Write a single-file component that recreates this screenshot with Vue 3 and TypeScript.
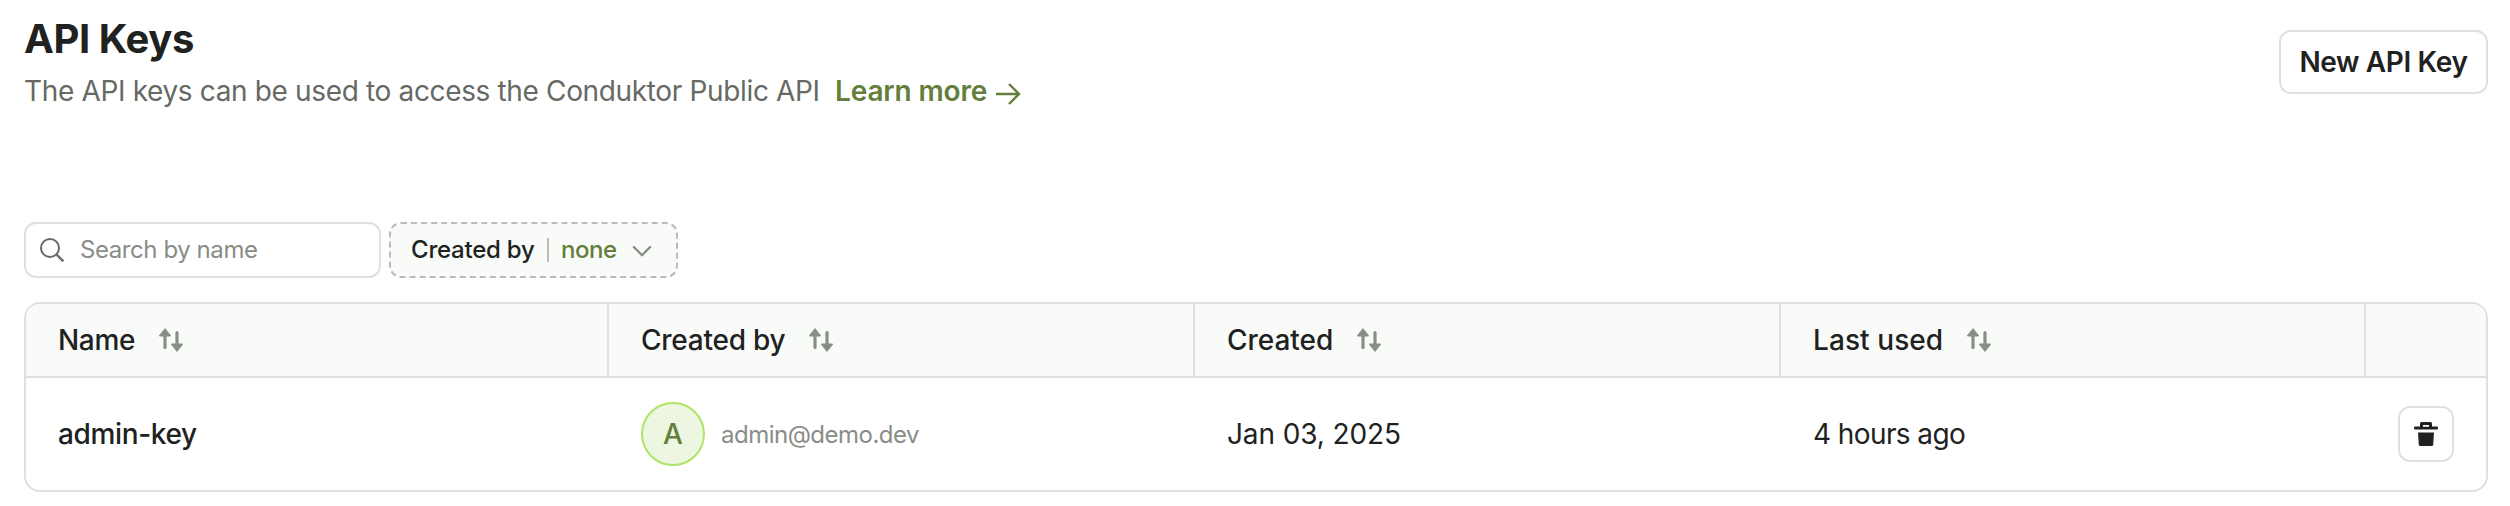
<script setup lang="ts">
interface Column {
  key: string
  label: string
}

interface ApiKey {
  name: string
  createdBy: string
  created: string
  lastUsed: string
}

const columns: Column[] = [
  { key: 'name', label: 'Name' },
  { key: 'created-by', label: 'Created by' },
  { key: 'created', label: 'Created' },
  { key: 'last-used', label: 'Last used' },
]

const keys: ApiKey[] = [
  { name: 'admin-key', createdBy: 'admin@demo.dev', created: 'Jan 03, 2025', lastUsed: '4 hours ago' },
]
</script>

<template>
  <main class="page">
    <header class="header">
      <div>
        <h1 class="title">API Keys</h1>
        <p class="subtitle">
          <span class="description">The API keys can be used to access the Conduktor Public API</span>
          <a class="learn" href="#">
            <span>Learn more</span>
            <svg class="learn-arrow" width="26" height="24" viewBox="0 0 26 24" fill="none" stroke="currentColor" stroke-width="2.4">
              <path d="M1 12H24M14 2L24 12L14 22" />
            </svg>
          </a>
        </p>
      </div>
      <button class="new-key" type="button">New API Key</button>
    </header>

    <div class="filters">
      <label class="search">
        <svg width="24" height="24" viewBox="0 0 24 24" fill="none" stroke="currentColor" stroke-width="2">
          <circle cx="10" cy="10" r="9" />
          <path d="M16.4 16.4L23.3 23.3" stroke-width="2.4" />
        </svg>
        <input class="search-input" type="text" placeholder="Search by name" />
      </label>
      <button class="filter" type="button">
        <span class="filter-label">Created by</span>
        <span class="filter-separator"></span>
        <span class="filter-value">none</span>
        <svg class="chevron" width="20" height="12" viewBox="0 0 20 12" fill="none" stroke="currentColor" stroke-width="2.2">
          <path d="M1.2 1.4L10 10.2L18.8 1.4" />
        </svg>
      </button>
    </div>

    <section class="table">
      <div class="row head">
        <div v-for="column in columns" :key="column.key" class="cell" :class="column.key">
          <span>{{ column.label }}</span>
          <svg class="sort" width="24" height="24" viewBox="0 0 24 24" fill="currentColor">
            <path d="M6 0L12 7.4Q12 8.5 11 8.5H7.6V19.5Q7.6 21 6 21Q4.4 21 4.4 19.5V8.5H1Q0 8.5 0 7.4Z" />
            <path d="M18 24L24 16.6Q24 15.5 23 15.5H19.6V4.5Q19.6 3 18 3Q16.4 3 16.4 4.5V15.5H13Q12 15.5 12 16.6Z" />
          </svg>
        </div>
        <div class="cell"></div>
      </div>
      <div v-for="item in keys" :key="item.name" class="row body">
        <div class="cell key-name">{{ item.name }}</div>
        <div class="cell">
          <span class="avatar">{{ item.createdBy.charAt(0).toUpperCase() }}</span>
          <span class="email">{{ item.createdBy }}</span>
        </div>
        <div class="cell date">{{ item.created }}</div>
        <div class="cell ago">{{ item.lastUsed }}</div>
        <div class="cell">
          <button class="delete" type="button" aria-label="Delete">
            <svg width="24" height="24" viewBox="0 0 24 24" fill="currentColor">
              <path fill-rule="evenodd" d="M6 4.6V1.5Q6 0 7.5 0H16.5Q18 0 18 1.5V4.6H23Q24 4.6 24 5.6V6.4Q24 7.4 23 7.4H1Q0 7.4 0 6.4V5.6Q0 4.6 1 4.6ZM9 4.8H15V3H9Z" />
              <path d="M4 10.5H20L19.2 22.5Q19 24 17.5 24H6.5Q5 24 4.8 22.5Z" />
            </svg>
          </button>
        </div>
      </div>
    </section>
  </main>
</template>

<style>
body {
  margin: 0;
  background: #fff;
}
</style>

<style scoped>
.page {
  box-sizing: border-box;
  width: 2510px;
  height: 506px;
  padding: 15px 22px 0 24px;
  color: #20221f;
  font-family: Inter, "Liberation Sans", sans-serif;
  font-size: 28px;
}

button {
  box-sizing: border-box;
  padding: 0;
  color: inherit;
  font-family: inherit;
  background: #fff;
  border: 2px solid #dfe0df;
  border-radius: 12px;
}

.header {
  display: flex;
  align-items: flex-start;
  justify-content: space-between;
  height: 207px;
}

.title {
  margin: 0;
  font-size: 40px;
  font-weight: 700;
  line-height: 48px;
  letter-spacing: -0.41px;
}

.subtitle {
  display: flex;
  margin: 8px 0 0;
  line-height: 40px;
  white-space: nowrap;
}

.description {
  width: 811px;
  color: #656a63;
  letter-spacing: -0.35px;
}

.learn {
  display: flex;
  align-items: center;
  gap: 8px;
  color: #647f3b;
  font-weight: 600;
  letter-spacing: -0.14px;
  text-decoration: none;
}

.learn-arrow {
  margin-top: 6px;
}

.new-key {
  width: 209px;
  height: 64px;
  margin-top: 15px;
  font-size: 28px;
  font-weight: 600;
  line-height: 60px;
  letter-spacing: -0.38px;
  white-space: nowrap;
}

.filters {
  display: flex;
  gap: 8px;
  height: 56px;
  margin-bottom: 24px;
}

.search {
  display: flex;
  box-sizing: border-box;
  align-items: center;
  width: 357px;
  padding-left: 14px;
  color: #656a63;
  border: 2px solid #dfe0df;
  border-radius: 12px;
}

.search-input {
  width: 280px;
  height: 48px;
  margin-left: 16px;
  padding: 0 0 1px;
  color: #20221f;
  font-family: inherit;
  font-size: 24px;
  letter-spacing: -0.426px;
  background: none;
  border: 0;
  outline: 0;
}

.search-input::placeholder {
  color: #898d87;
  opacity: 1;
}

.filter {
  display: flex;
  align-items: center;
  width: 289px;
  padding-left: 20px;
  font-size: 24px;
  font-weight: 500;
  background: #f9fbf8;
  border: 2px dashed #b9bcb7;
}

.filter-label {
  width: 136px;
  padding-bottom: 1px;
  letter-spacing: -0.226px;
  text-align: left;
}

.filter-separator {
  width: 2px;
  height: 24px;
  margin-right: 12px;
  background: #b9bcb7;
}

.filter-value {
  width: 71px;
  padding-bottom: 1px;
  color: #647f3b;
  letter-spacing: -0.457px;
  text-align: left;
}

.chevron {
  margin-top: 2px;
  color: #898d87;
}

.table {
  box-sizing: border-box;
  width: 2464px;
  height: 190px;
  overflow: hidden;
  border: 2px solid #dfe0df;
  border-radius: 16px;
}

.row {
  display: grid;
  grid-template-columns: 581px 586px 586px 585px 1fr;
}

.head {
  height: 72px;
  font-weight: 500;
  background: #f9fbf8;
  border-bottom: 2px solid #dfe0df;
}

.head .cell + .cell {
  border-left: 2px solid #dfe0df;
}

.body {
  height: 112px;
}

.cell {
  display: flex;
  box-sizing: border-box;
  align-items: center;
  padding-left: 32px;
  white-space: nowrap;
}

.body .cell + .cell {
  padding-left: 34px;
}

.sort {
  margin-left: 24px;
  color: #898d87;
}

.name {
  letter-spacing: -0.316px;
}

.created-by {
  letter-spacing: -0.245px;
}

.created {
  letter-spacing: -0.026px;
}

.last-used {
  letter-spacing: 0.08px;
}

.key-name {
  font-weight: 500;
  letter-spacing: -0.358px;
}

.avatar {
  display: flex;
  box-sizing: border-box;
  align-items: center;
  justify-content: center;
  width: 64px;
  height: 64px;
  color: #647f3b;
  font-size: 28px;
  font-weight: 500;
  background: #edf6e0;
  border: 2px solid #afe364;
  border-radius: 50%;
}

.email {
  margin-left: 16px;
  color: #898d87;
  font-size: 24px;
  letter-spacing: -0.508px;
}

.date {
  letter-spacing: -0.11px;
}

.ago {
  letter-spacing: -0.596px;
}

.delete {
  display: flex;
  align-items: center;
  justify-content: center;
  width: 56px;
  height: 56px;
}
</style>
